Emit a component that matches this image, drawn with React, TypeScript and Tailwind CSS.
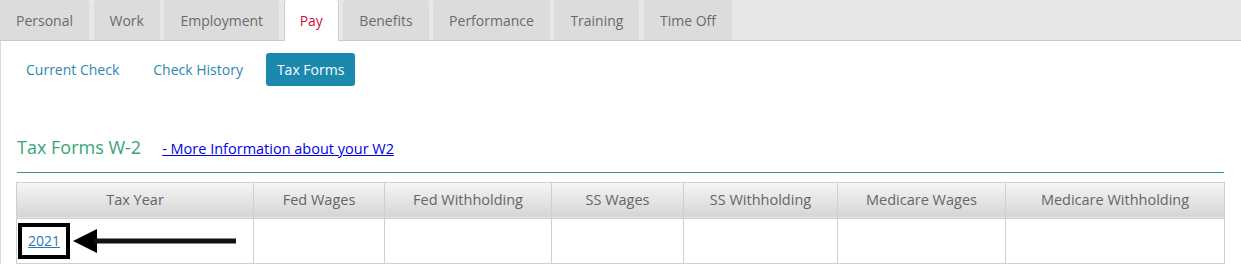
import React from 'react';

const tabs = ['Personal', 'Work', 'Employment', 'Pay', 'Benefits', 'Performance', 'Training', 'Time Off'];
const subNav = ['Current Check', 'Check History', 'Tax Forms'];
const columns = [
  { label: 'Tax Year', w: 'w-[237px]' },
  { label: 'Fed Wages', w: 'w-[131px]' },
  { label: 'Fed Withholding', w: 'w-[167px]' },
  { label: 'SS Wages', w: 'w-[132px]' },
  { label: 'SS Withholding', w: 'w-[154px]' },
  { label: 'Medicare Wages', w: 'w-[168px]' },
  { label: 'Medicare Withholding', w: 'w-[219px]' },
];

const App: React.FC = () => {
  return (
    <div className="w-[1241px] h-[275px] bg-white font-['Open_Sans',sans-serif] text-[14px] overflow-hidden">
      {/* Tab bar */}
      <div className="flex h-[41px] bg-[#e8e8e8] border-b border-[#c9c9c9] gap-[4.5px]">
        {tabs.map((t) =>
          t === 'Pay' ? (
            <div
              key={t}
              className="h-[41px] px-[15px] flex items-center bg-white border-x border-[#cfcfcf] rounded-t-[3px] text-[#d0103a] -mb-px"
            >
              {t}
            </div>
          ) : (
            <div
              key={t}
              className="h-[40px] px-4 flex items-center bg-[#dcdcdc] rounded-t-[3px] text-[#6b6b6b]"
            >
              {t}
            </div>
          )
        )}
      </div>

      {/* Content */}
      <div className="border-l border-[#dadada] pl-[15px] pr-[17px]">
        {/* Sub nav */}
        <div className="flex gap-3 pt-3 -ml-px">
          {subNav.map((s) =>
            s === 'Tax Forms' ? (
              <div key={s} className="h-[33px] px-[11px] flex items-center rounded-[3px] bg-[#1b88ae] text-white">
                {s}
              </div>
            ) : (
              <div key={s} className="h-[33px] px-[11px] flex items-center text-[#2d87b6]">
                {s}
              </div>
            )
          )}
        </div>

        {/* Heading */}
        <div className="flex items-baseline gap-[21px] mt-[50px] pl-px">
          <h2 className="text-[18px] leading-[22px] text-[#37a575]">Tax Forms W-2</h2>
          <a className="text-[#0000ee] underline text-[14.5px] cursor-pointer">- More Information about your W2</a>
        </div>
        <div className="h-px bg-[#3c9a6d] mt-[12px] ml-px" />

        {/* Table */}
        <table className="mt-[9px] table-fixed border-collapse w-[1208px]">
          <thead>
            <tr>
              {columns.map((c) => (
                <th
                  key={c.label}
                  className={`${c.w} h-[36px] border border-[#cfcfcf] bg-gradient-to-b from-[#f6f6f6] to-[#d4d4d4] font-normal text-[14.5px] text-[#666] text-center`}
                >
                  {c.label}
                </th>
              ))}
            </tr>
          </thead>
          <tbody>
            <tr>
              <td className="h-[45px] border border-[#cfcfcf] p-0 relative">
                <div className="flex items-center pl-px">
                  <div className="border-4 border-black px-[6px] py-[4px] leading-[20px]">
                    <a className="text-[#2a7bb0] underline cursor-pointer">2021</a>
                  </div>
                </div>
                {/* annotation arrow */}
                <svg className="absolute left-[55px] top-[9px]" width="166" height="26" viewBox="0 0 166 26">
                  <polygon points="1,13 25,1 25,25" fill="#000" />
                  <rect x="22" y="10.5" width="142" height="5" fill="#111" />
                </svg>
              </td>
              {columns.slice(1).map((c) => (
                <td key={c.label} className="border border-[#cfcfcf]" />
              ))}
            </tr>
          </tbody>
        </table>
      </div>
    </div>
  );
};

export default App;
